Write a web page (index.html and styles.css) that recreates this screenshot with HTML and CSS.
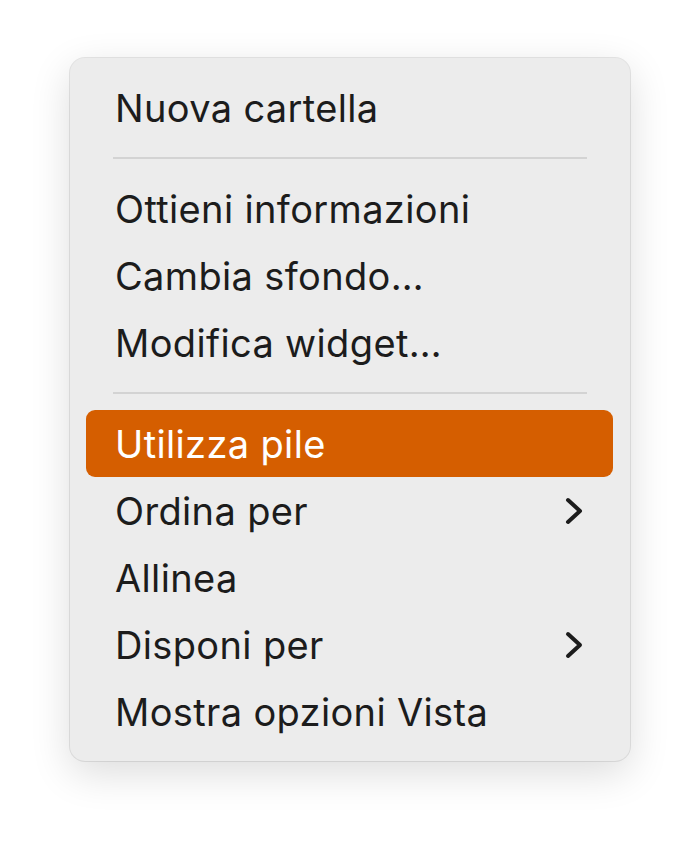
FILE: index.html
```html
<!DOCTYPE html>
<html lang="it">
<head>
    <meta charset="utf-8" />
    <title>Menu contestuale</title>
    <link rel="stylesheet" href="styles.css">
</head>
<body>
    <div class="menu">
        <div class="menu-item">Nuova cartella</div>
        <div class="separator"></div>
        <div class="menu-item">Ottieni informazioni</div>
        <div class="menu-item">Cambia sfondo…</div>
        <div class="menu-item">Modifica widget…</div>
        <div class="separator"></div>
        <div class="menu-item active">Utilizza pile</div>
        <div class="menu-item">
            <span>Ordina per</span>
            <svg class="chevron" width="18" height="28" viewBox="0 0 18 28"><path d="M3 3 L15 14 L3 25" /></svg>
        </div>
        <div class="menu-item">Allinea</div>
        <div class="menu-item">
            <span>Disponi per</span>
            <svg class="chevron" width="18" height="28" viewBox="0 0 18 28"><path d="M3 3 L15 14 L3 25" /></svg>
        </div>
        <div class="menu-item">Mostra opzioni Vista</div>
    </div>
</body>
</html>
```

FILE: styles.css
```css
* { box-sizing: border-box; margin: 0; padding: 0; }
html, body {
    min-height: 100%;
}
body {
    font-family: Inter, "Liberation Sans", sans-serif;
    background: #ffffff;
    color: #1c1c1c;
    padding: 58px 0 84px;
}
.menu {
    width: 560px;
    margin: 0 auto;
    padding: 16px 17px 16px 16px;
    background: #ececec;
    border-radius: 15px;
    box-shadow: 0 12px 40px rgba(0,0,0,0.14), 0 0 0 1px rgba(0,0,0,0.09);
}
.menu-item {
    height: 67px;
    padding: 0 30px 0 29px;
    display: flex;
    align-items: center;
    justify-content: space-between;
    font-size: 38px;
    letter-spacing: 0.35px;
    border-radius: 9px;
}
.menu-item.active {
    background: #d55e00;
    color: #ffffff;
}
.separator {
    height: 2px;
    margin: 16px 26px 16px 27px;
    background: #d3d3d3;
}
.chevron path {
    fill: none;
    stroke: #1c1c1c;
    stroke-width: 4;
    stroke-linecap: round;
    stroke-linejoin: round;
}
```
